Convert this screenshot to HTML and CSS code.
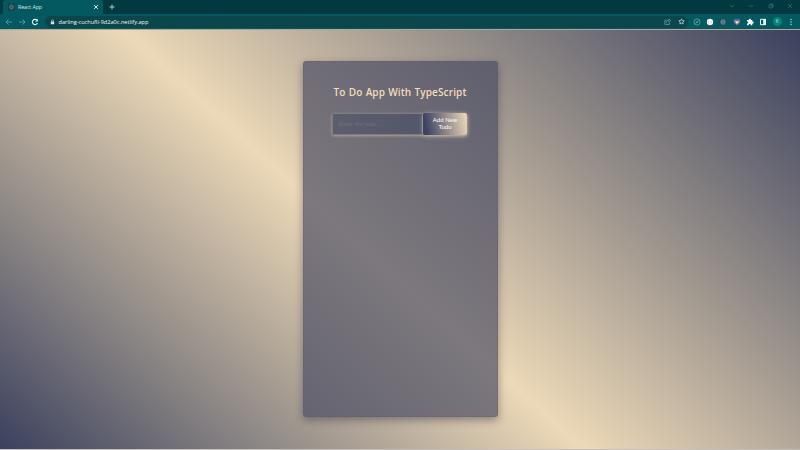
FILE: index.html
```html
<!DOCTYPE html>
<html lang="en">
<head>
<meta charset="utf-8">
<title>React App</title>
<link rel="stylesheet" href="styles.css">
</head>
<body>
<div class="tabs">
  <div class="tab">
    <svg class="fav" viewBox="0 0 8 8"><rect width="8" height="8" rx="1" fill="#203940"/><g fill="none" stroke="#568f9b" stroke-width=".5"><ellipse cx="4" cy="4" rx="3" ry="1.2"/><ellipse cx="4" cy="4" rx="3" ry="1.2" transform="rotate(60 4 4)"/><ellipse cx="4" cy="4" rx="3" ry="1.2" transform="rotate(120 4 4)"/></g></svg>
    <span class="name">React App</span>
    <svg class="close" viewBox="0 0 6 6"><path d="M1 1l4 4M5 1L1 5" stroke="#e3f1f1" stroke-width=".9"/></svg>
  </div>
  <svg class="plus" viewBox="0 0 6 6"><path d="M3 .5v5M.5 3h5" stroke="#c3d8d9" stroke-width=".9"/></svg>
  <div class="window">
    <svg viewBox="0 0 6 6"><path d="M1 2l2 2 2-2"/></svg>
    <svg viewBox="0 0 6 6"><path d="M1 3h4"/></svg>
    <svg viewBox="0 0 6 6"><path d="M1 2h3v3H1zM2 2V1h3v3H4"/></svg>
    <svg viewBox="0 0 6 6"><path d="M1 1l4 4M5 1L1 5"/></svg>
  </div>
</div>
<div class="toolbar">
  <svg class="nav" viewBox="0 0 8 8"><path d="M7 4H1M3.7 1.3L1 4l2.7 2.7" stroke="#6fa6aa"/></svg>
  <svg class="nav" viewBox="0 0 8 8"><path d="M1 4h6M4.3 1.3L7 4 4.3 6.7" stroke="#6fa6aa"/></svg>
  <svg class="nav" viewBox="0 0 8 8"><path d="M6.4 5A2.6 2.6 0 1 1 5.9 2.2" stroke="#e8f6f6" stroke-width="1.1"/><path d="M6.8 .8v2.7H4.1z" fill="#e8f6f6" stroke="none"/></svg>
  <div class="address">
    <svg class="lock" viewBox="0 0 6 6"><rect x="1" y="2.5" width="4" height="3.2" rx=".4" fill="#d5e3e4"/><path d="M1.8 2.7V1.6a1.2 1.2 0 0 1 2.4 0v1.1" fill="none" stroke="#d5e3e4" stroke-width=".7"/></svg>
    <span class="url">darling-cuchufli-9d2a0c.netlify.app</span>
    <svg class="tool share" viewBox="0 0 8 8"><path d="M3 2.500H1v4.800h5.400V5.600M2.600 5.400c.3-2 1.500-2.900 3-2.900V1l2 2-2 2V3.700" fill="none" stroke="#9dbcbe" stroke-width=".65"/></svg>
    <svg class="tool" viewBox="0 0 8 8"><path d="M4 1l.9 2 2.200.2-1.700 1.500.5 2.200L4 5.800 2.100 6.900l.5-2.200L.9 3.200 3.100 3z" fill="none" stroke="#c9dcdd" stroke-width=".85"/></svg>
  </div>
  <div class="extensions">
    <svg viewBox="0 0 8 8"><circle cx="4" cy="4" r="3.1" fill="none" stroke="#77aaae" stroke-width=".7"/><path d="M2.500 5.500l3-3M3 3.500l1.500 1.500" stroke="#86b5b8" stroke-width=".8"/></svg>
    <svg viewBox="0 0 8 8"><circle cx="4" cy="4" r="3.200" fill="#f4f2ed"/><path d="M2.500 3.200L1.800 4l.7.8M5.500 3.200l.7.8-.7.8" fill="none" stroke="#c39a87" stroke-width=".5"/></svg>
    <svg viewBox="0 0 8 8"><rect x=".2" y=".2" width="7.600" height="7.600" rx=".8" fill="#27434b"/><g fill="none" stroke="#53a7bc" stroke-width=".55"><ellipse cx="4" cy="4" rx="2.800" ry="1.100"/><ellipse cx="4" cy="4" rx="2.800" ry="1.100" transform="rotate(60 4 4)"/><ellipse cx="4" cy="4" rx="2.800" ry="1.100" transform="rotate(120 4 4)"/></g></svg>
    <svg viewBox="0 0 8 8"><path d="M.5 2L2 .8h4L7.500 2 6.800 5.200 4 7.500 1.200 5.200z" fill="#4862a4"/><path d="M1.300 2.200l1.700.5h2l1.700-.5-.6 2.300L4 6.800 1.900 4.500z" fill="#d99a84"/><circle cx="4" cy="4.200" r="1" fill="#f0e5d8"/></svg>
    <svg viewBox="0 0 8 8"><path d="M1 2h1.900a1.050 1.050 0 1 1 2 0H6.300v1.600a1.050 1.050 0 1 1 0 2V7.300H4.600a1 1 0 1 0-1.900 0H1V5.300a.9.9 0 1 0 0-1.700z" fill="#f3f8f8"/></svg>
    <svg viewBox="0 0 8 8"><path d="M1.500 1.300h5v5.400h-5z" fill="none" stroke="#f0f8f7"/><path d="M4.200 1h2.500v6H4.200z" fill="#f0f8f7"/></svg>
    <span class="avatar">K</span>
    <svg viewBox="0 0 8 8"><g fill="#c2dcde"><circle cx="4" cy="1.500" r=".7"/><circle cx="4" cy="4" r=".7"/><circle cx="4" cy="6.500" r=".7"/></g></svg>
  </div>
</div>
<main class="page">
  <section class="card">
    <h1>To Do App With TypeScript</h1>
    <form class="form">
      <input class="field" type="text" placeholder="Enter the todo ...">
      <button class="add" type="button">Add New Todo</button>
    </form>
  </section>
</main>
</body>
</html>
```
FILE: styles.css
```css
* { box-sizing: border-box; }
body {
  margin: 0;
  height: 450px;
  overflow: hidden;
  display: flex;
  flex-direction: column;
  font-family: "Open Sans", "Noto Sans", sans-serif;
}
svg { display: block; flex: none; }
.tabs {
  height: 14px;
  flex: none;
  display: flex;
  align-items: center;
  background: #00393f;
}
.tab {
  width: 100px;
  height: 14px;
  margin-left: 3px;
  padding: 0 4px 0 5px;
  display: flex;
  align-items: center;
  border-radius: 3px 3px 0 0;
  background: #03595f;
  color: #d8e8e9;
  font-size: 5.3px;
}
.fav { width: 7px; height: 8px; margin-right: 3px; }
.name { flex: 1; letter-spacing: -0.1px; font-weight: 500; }
.close { width: 6px; height: 6px; }
.plus { width: 6px; height: 6px; margin-left: 6px; }
.window {
  margin-left: auto;
  padding: 0 7px 2px 0;
  display: flex;
  gap: 13.3px;
}
.window svg {
  width: 6px;
  height: 6px;
  fill: none;
  stroke: #4f767a;
  stroke-width: .6;
}
.toolbar {
  height: 15px;
  flex: none;
  display: flex;
  align-items: center;
  padding: 0 5px;
  background: #03595f;
}
.nav {
  width: 8px;
  height: 8px;
  margin-right: 5.2px;
  fill: none;
  stroke-width: .75;
}
.address {
  width: 643px;
  height: 12px;
  padding: 0 3px 0 5px;
  display: flex;
  align-items: center;
  border-radius: 6px;
  background: #0b464c;
  color: #f2f8f8;
  font-size: 5.6px;
  font-weight: 500;
}
.lock { width: 5px; height: 6px; margin-right: 4px; }
.url { flex: 1; }
.tool { width: 7px; height: 7px; }
.share { margin-right: 6.5px; }
.extensions {
  flex: 1;
  margin-left: 5px;
  display: flex;
  align-items: center;
  justify-content: space-between;
}
.extensions svg { width: 8px; height: 8px; }
.avatar {
  width: 9px;
  height: 9px;
  border-radius: 50%;
  background: #008577;
  color: #c5e6e2;
  font-size: 4.5px;
  line-height: 9px;
  text-align: center;
}
.page {
  flex: 1;
  display: flex;
  justify-content: center;
  align-items: flex-start;
  padding-top: 31px;
  border-top: 1px solid #b3a495;
  border-bottom: 1px solid #c3beb9;
  background: linear-gradient(42.3deg, #3a405e 0%, #958e89 23.1%, #edd9b8 46.25%, #958e89 72.500%, #3a405e 100%);
}
.card {
  width: 195px;
  height: 356px;
  padding: 22px 29px 0;
  border: 1px solid rgba(90, 92, 108, .3);
  border-radius: 3px;
  background: rgba(71, 73, 97, .68);
  box-shadow: 0 3px 8px rgba(45, 45, 65, .48);
}
h1 {
  margin: 0 -4px;
  height: 16px;
  font-family: "Open Sans", sans-serif;
  font-size: 10px;
  line-height: 16px;
  font-weight: 650;
  letter-spacing: .12px;
  word-spacing: .5px;
  color: #f2ddbb;
  text-align: center;
  white-space: nowrap;
}
.form {
  margin: 12.5px .5px 0 -.5px;
  height: 22px;
  display: flex;
  border-radius: 2px;
  box-shadow: 0 1px 3px rgba(237, 217, 184, .5);
}
.field {
  width: 91px;
  min-width: 0;
  height: 22px;
  padding: 0 6px;
  border: 1px solid #7d7c7e;
  border-radius: 2px 0 0 2px;
  outline: none;
  background: linear-gradient(90deg, #5b5e6c, #53576a);
  font: 5.9px "Liberation Sans", sans-serif;
}
.field::placeholder { color: #72727a; opacity: 1; }
.add {
  flex: 1;
  min-width: 0;
  padding: 1px 6px 0;
  border: 0;
  border-radius: 2px;
  background: linear-gradient(80deg, #3c4263 8%, #e5d2b4 95%);
  box-shadow: 0 1px 5px rgba(237, 217, 184, .55);
  color: #fff;
  font: 6px/6.8px "Liberation Sans", sans-serif;
  text-align: center;
}
```
